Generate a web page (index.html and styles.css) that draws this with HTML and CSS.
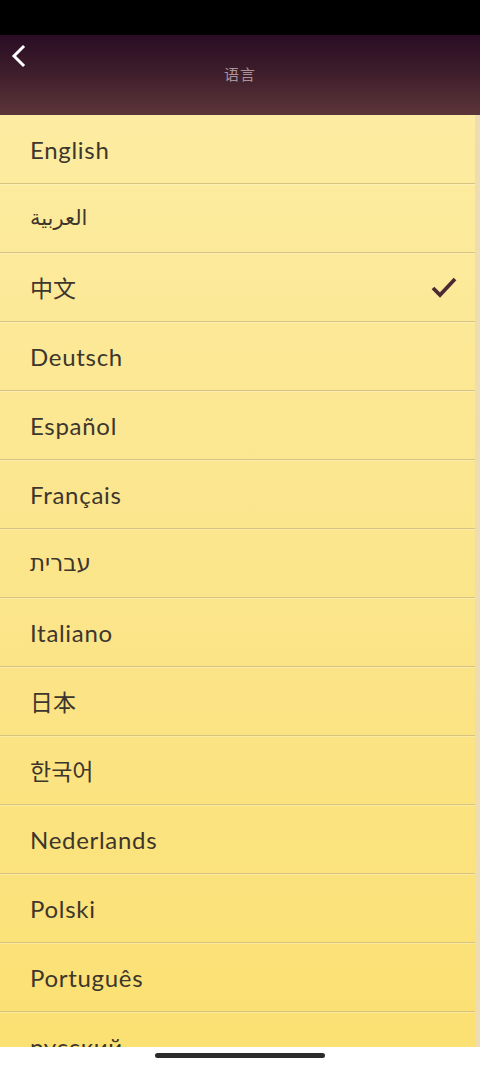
FILE: index.html
```html
<!DOCTYPE html>
<html lang="zh">
<head>
  <meta charset="UTF-8" />
  <meta name="viewport" content="width=device-width, initial-scale=1.0" />
  <title>语言</title>
  <link rel="stylesheet" href="styles.css">
</head>
<body>
  <div class="screen">
    <div class="status-bar"></div>

    <header class="nav-bar">
      <a class="back-btn" href="#">
        <svg viewBox="0 0 16 24" width="16" height="24">
          <path d="M13 3 L4 12 L13 21" fill="none" stroke="#fff" stroke-width="3" stroke-linecap="square" />
        </svg>
      </a>
      <h1 class="nav-title">语言</h1>
    </header>

    <div class="list-area">
      <ul class="lang-list">
        <li class="lang-row">English</li>
        <li class="lang-row" lang="ar">العربية</li>
        <li class="lang-row selected" lang="zh">
          中文
          <svg class="check" viewBox="0 0 26 24" width="26" height="24">
            <path d="M2 13 L9 20 L24 4" fill="none" stroke="#4a2a35" stroke-width="3.8" />
          </svg>
        </li>
        <li class="lang-row">Deutsch</li>
        <li class="lang-row">Español</li>
        <li class="lang-row">Français</li>
        <li class="lang-row" lang="he">עברית</li>
        <li class="lang-row">Italiano</li>
        <li class="lang-row" lang="ja">日本</li>
        <li class="lang-row" lang="ko">한국어</li>
        <li class="lang-row">Nederlands</li>
        <li class="lang-row">Polski</li>
        <li class="lang-row">Português</li>
        <li class="lang-row" lang="ru">русский</li>
      </ul>
      <div class="scroll-track"></div>
    </div>

    <div class="home-area">
      <span class="home-indicator"></span>
    </div>
  </div>
</body>
</html>
```

FILE: styles.css
```css
/* Basic Reset */
* {
  margin: 0;
  padding: 0;
  box-sizing: border-box;
}

body {
  font-family: Lato, "Noto Sans CJK SC", "DejaVu Sans", sans-serif;
  color: #3d362c;
  background: #fff;
}

.screen {
  width: 480px;
  height: 1066px;
  display: flex;
  flex-direction: column;
  overflow: hidden;
}

/* Status bar */
.status-bar {
  height: 35px;
  background: #000;
  flex-shrink: 0;
}

/* Navigation bar */
.nav-bar {
  height: 80px;
  flex-shrink: 0;
  background: linear-gradient(180deg, #290d24 0%, #3d1d2b 45%, #5c3539 100%);
  position: relative;
  display: flex;
  justify-content: center;
  padding-top: 28px;
}
.back-btn {
  position: absolute;
  left: 10px;
  top: 9px;
  display: block;
  width: 16px;
  height: 24px;
}
.nav-title {
  font-family: "Noto Sans CJK SC", sans-serif;
  font-size: 15px;
  font-weight: 400;
  color: #a8949a;
  letter-spacing: 1px;
}

/* Language list */
.list-area {
  flex: 1;
  display: flex;
  overflow: hidden;
  background: linear-gradient(180deg, #fdeca1 0%, #fbe487 60%, #fbe173 100%);
}
.lang-list {
  flex: 1;
  list-style: none;
}
.lang-row {
  height: 69px;
  display: flex;
  align-items: center;
  justify-content: space-between;
  padding: 0 18px 0 30px;
  font-size: 24px;
  letter-spacing: 0.7px;
  border-bottom: 1px solid #d6c281;
  box-shadow: 0 1px 0 rgba(255, 255, 255, 0.25);
}
.lang-row[lang="zh"],
.lang-row[lang="ja"] {
  font-family: "Noto Sans CJK SC", sans-serif;
  font-size: 23px;
  letter-spacing: 0;
}
.lang-row[lang="ko"] {
  font-family: "Noto Sans CJK KR", sans-serif;
  font-size: 23px;
  letter-spacing: 0;
}
.lang-row[lang="ar"] {
  font-family: "DejaVu Sans", sans-serif;
  font-size: 21px;
  letter-spacing: 0;
}
.lang-row[lang="he"] {
  font-family: "DejaVu Sans", sans-serif;
  font-size: 23px;
  letter-spacing: 0;
}
.scroll-track {
  width: 5px;
  background: #eedcb3;
}

/* Home indicator */
.home-area {
  height: 19px;
  flex-shrink: 0;
  background: #fff;
  display: flex;
  justify-content: center;
  padding-top: 6px;
}
.home-indicator {
  width: 170px;
  height: 5px;
  border-radius: 3px;
  background: #2b2b2b;
}
```
